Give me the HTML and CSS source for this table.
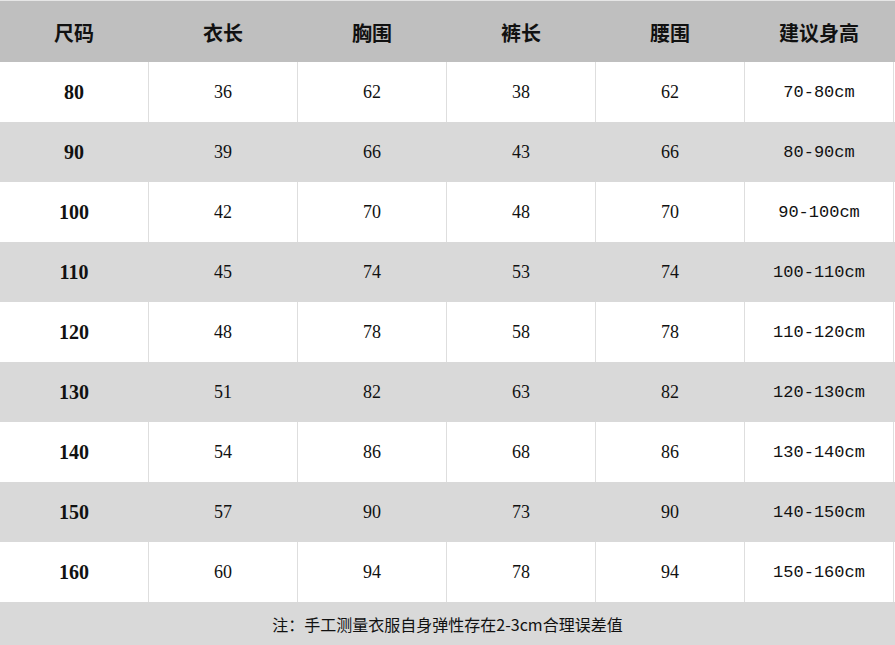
FILE: index.html
```html
<!DOCTYPE html>
<html lang="zh">
<head>
<meta charset="utf-8">
<link rel="stylesheet" href="styles.css">
</head>
<body>
<div class="table">
  <div class="row head">
    <div class="cell">尺码</div><div class="cell">衣长</div><div class="cell">胸围</div><div class="cell">裤长</div><div class="cell">腰围</div><div class="cell">建议身高</div>
  </div>
  <div class="row w"><div class="cell size">80</div><div class="cell num">36</div><div class="cell num">62</div><div class="cell num">38</div><div class="cell num">62</div><div class="cell h">70-80cm</div></div>
  <div class="row g"><div class="cell size">90</div><div class="cell num">39</div><div class="cell num">66</div><div class="cell num">43</div><div class="cell num">66</div><div class="cell h">80-90cm</div></div>
  <div class="row w"><div class="cell size">100</div><div class="cell num">42</div><div class="cell num">70</div><div class="cell num">48</div><div class="cell num">70</div><div class="cell h">90-100cm</div></div>
  <div class="row g"><div class="cell size">110</div><div class="cell num">45</div><div class="cell num">74</div><div class="cell num">53</div><div class="cell num">74</div><div class="cell h">100-110cm</div></div>
  <div class="row w"><div class="cell size">120</div><div class="cell num">48</div><div class="cell num">78</div><div class="cell num">58</div><div class="cell num">78</div><div class="cell h">110-120cm</div></div>
  <div class="row g"><div class="cell size">130</div><div class="cell num">51</div><div class="cell num">82</div><div class="cell num">63</div><div class="cell num">82</div><div class="cell h">120-130cm</div></div>
  <div class="row w"><div class="cell size">140</div><div class="cell num">54</div><div class="cell num">86</div><div class="cell num">68</div><div class="cell num">86</div><div class="cell h">130-140cm</div></div>
  <div class="row g"><div class="cell size">150</div><div class="cell num">57</div><div class="cell num">90</div><div class="cell num">73</div><div class="cell num">90</div><div class="cell h">140-150cm</div></div>
  <div class="row w"><div class="cell size">160</div><div class="cell num">60</div><div class="cell num">94</div><div class="cell num">78</div><div class="cell num">94</div><div class="cell h">150-160cm</div></div>
  <div class="foot">注：手工测量衣服自身弹性存在2-3cm合理误差值</div>
</div>
</body>
</html>
```

FILE: styles.css
```css
html, body {
  margin: 0;
  padding: 0;
  background: #ffffff;
}
.table {
  width: 895px;
  height: 645px;
  display: flex;
  flex-direction: column;
  color: #111;
}
.row {
  display: grid;
  grid-template-columns: repeat(6, 149px);
  height: 60px;
}
.row.head {
  height: 62px;
  background: #bfbfbf;
  border-top: 1px solid #e6e6e6;
  box-sizing: border-box;
}
.row.w { background: #ffffff; }
.row.g { background: #d9d9d9; }
.cell {
  display: flex;
  align-items: center;
  justify-content: center;
  border-right: 1px solid #dedede;
}
.row.g .cell { border-right-color: #d9d9d9; }
.row.head .cell {
  border-right-color: #bfbfbf;
  font-family: "Noto Sans CJK SC", sans-serif;
  font-weight: 700;
  font-size: 20px;
  padding-top: 1px;
}
.cell.size {
  font-family: "Liberation Serif", serif;
  font-weight: 700;
  font-size: 20px;
}
.cell.num {
  font-family: "Liberation Serif", serif;
  font-size: 18px;
}
.cell.h {
  font-family: "Liberation Mono", monospace;
  font-size: 17px;
}
.foot {
  flex: 1;
  background: #d9d9d9;
  display: flex;
  align-items: center;
  justify-content: center;
  font-family: "Noto Sans CJK SC", sans-serif;
  font-size: 16px;
  color: #111;
}
```
